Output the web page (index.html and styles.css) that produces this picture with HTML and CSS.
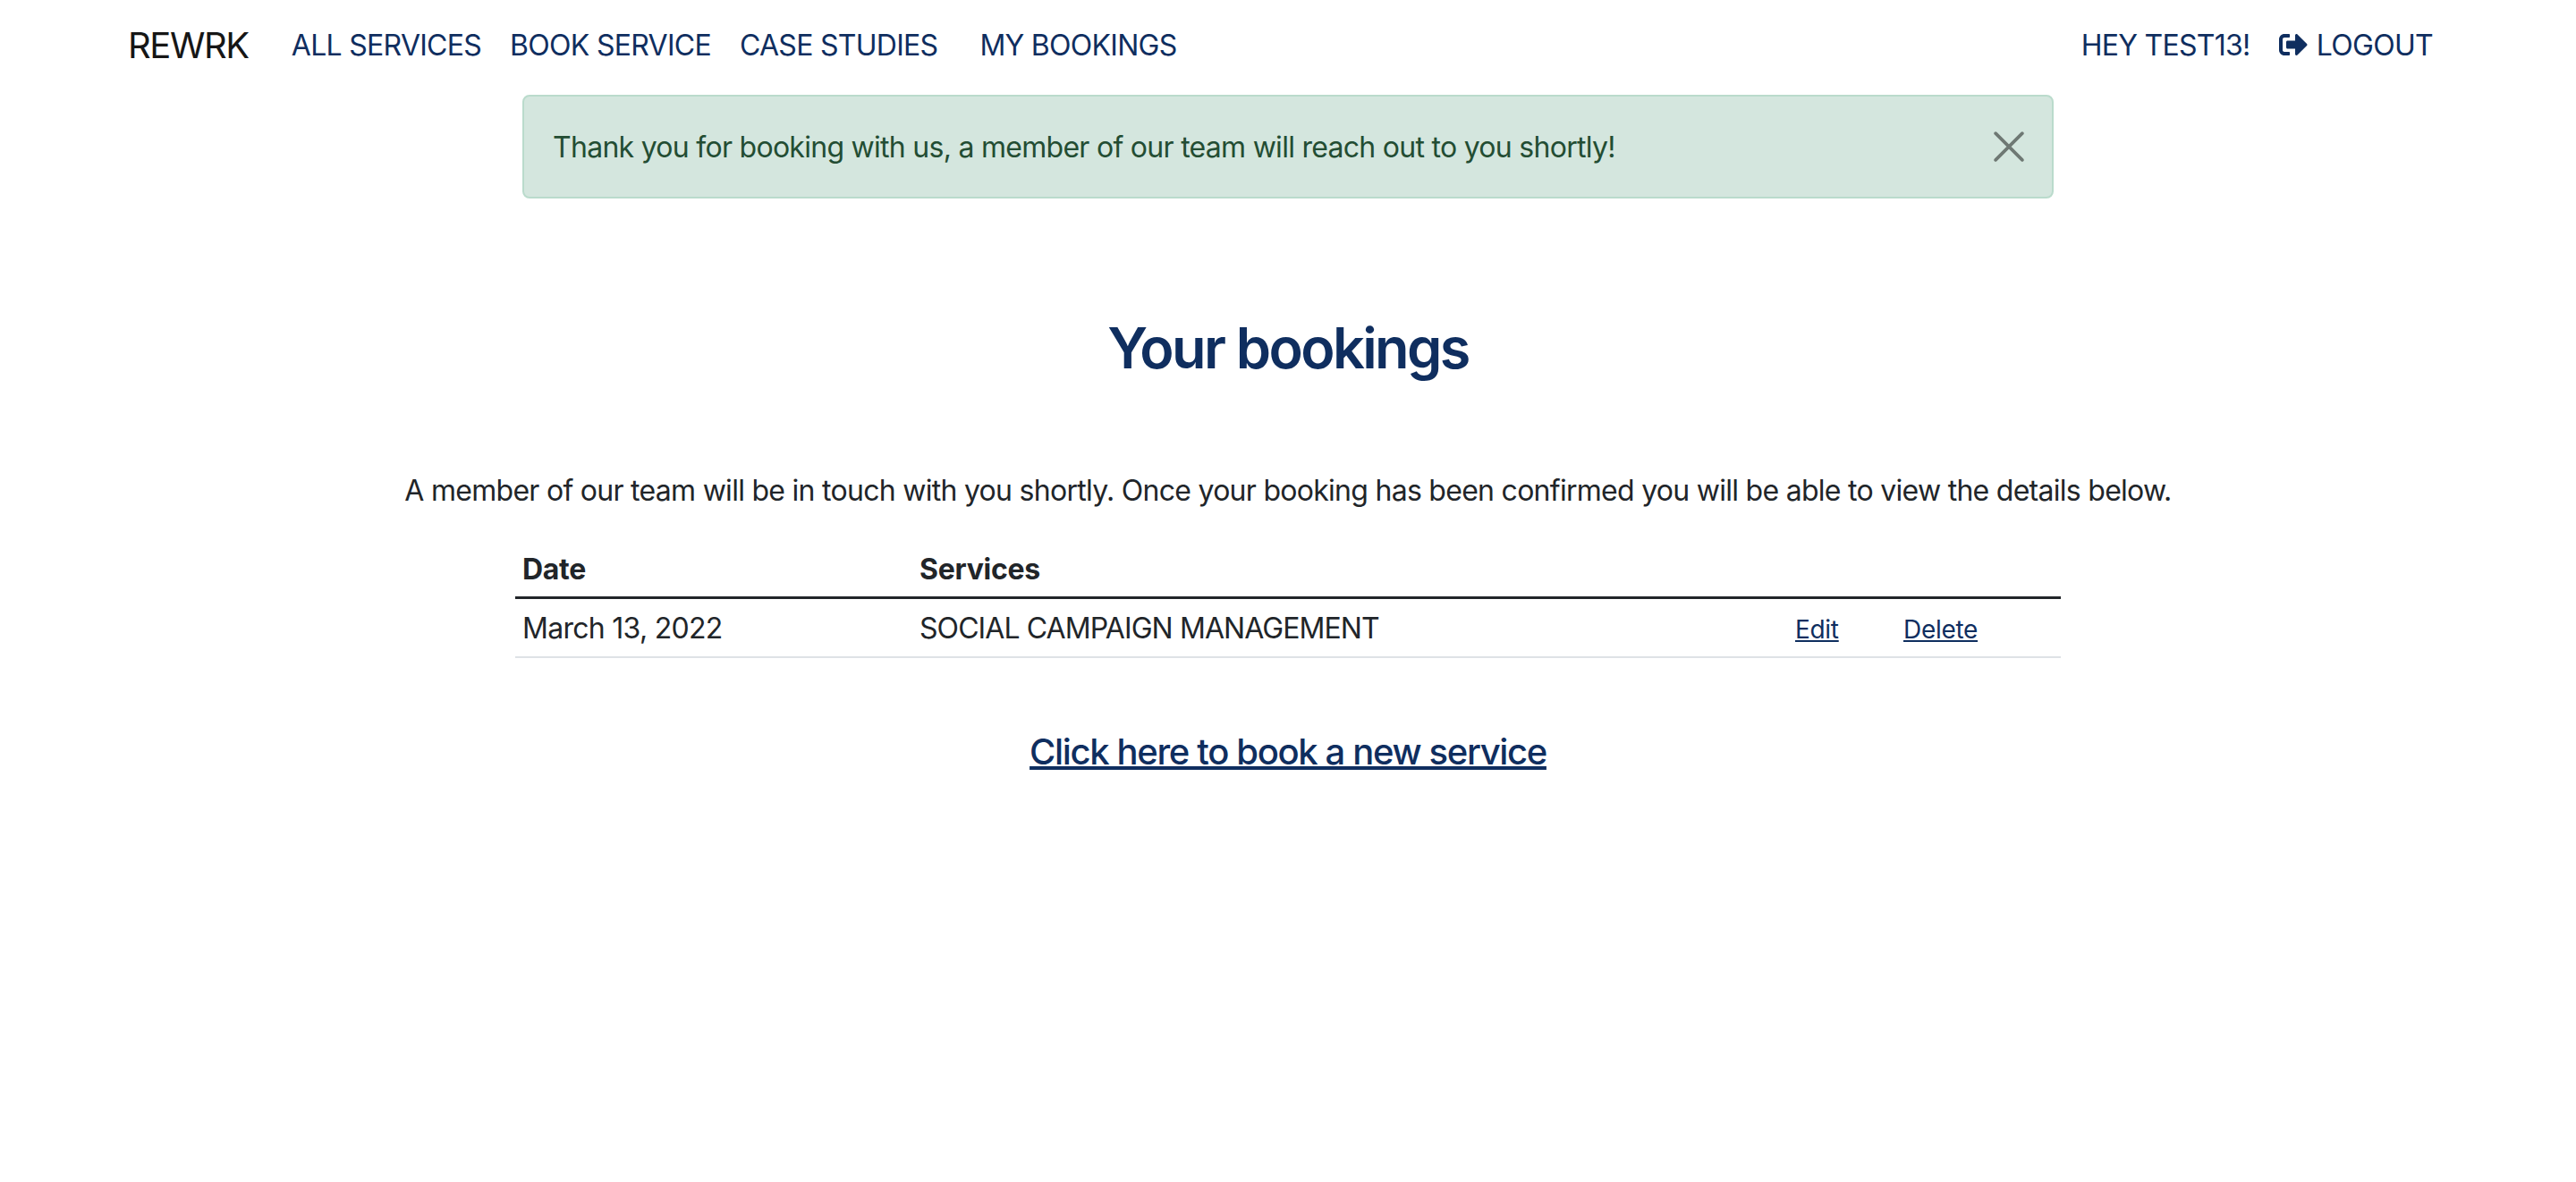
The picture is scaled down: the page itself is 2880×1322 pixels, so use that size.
FILE: index.html
```html
<!DOCTYPE html>
<html lang="en">
<head>
    <meta charset="UTF-8">
    <meta name="viewport" content="width=device-width, initial-scale=1.0">
    <title>Your bookings</title>
    <link rel="stylesheet" href="styles.css">
</head>
<body>
    <nav class="navbar">
        <a class="brand" href="#">REWRK</a>
        <div class="nav-links">
            <a href="#">ALL SERVICES</a>
            <a href="#">BOOK SERVICE</a>
            <a href="#">CASE STUDIES</a>
            <a class="nav-last" href="#">MY BOOKINGS</a>
        </div>
        <div class="nav-user">
            <a href="#">HEY TEST13!</a>
            <a class="logout" href="#">
                <svg class="logout-icon" viewBox="0 0 512 512" aria-hidden="true">
                    <path d="M497 273L329 441c-15 15-41 4.500-41-17v-96H152c-13.300 0-24-10.700-24-24v-96c0-13.300 10.700-24 24-24h136V88c0-21.400 25.900-32 41-17l168 168c9.300 9.400 9.300 24.600 0 34zM192 436v-40c0-6.600-5.400-12-12-12H96c-17.700 0-32-14.300-32-32V160c0-17.700 14.300-32 32-32h84c6.600 0 12-5.400 12-12V76c0-6.600-5.400-12-12-12H96c-53 0-96 43-96 96v192c0 53 43 96 96 96h84c6.600 0 12-5.400 12-12z"/>
                </svg>
                LOGOUT
            </a>
        </div>
    </nav>

    <div class="alert">
        <span class="alert-text">Thank you for booking with us, a member of our team will reach out to you shortly!</span>
        <button class="alert-close" type="button" aria-label="Close">
            <svg viewBox="0 0 16 16" aria-hidden="true">
                <path d="M1 1l14 14M15 1L1 15"/>
            </svg>
        </button>
    </div>

    <main class="content">
        <h1>Your bookings</h1>
        <p class="intro">A member of our team will be in touch with you shortly. Once your booking has been confirmed you will be able to view the details below.</p>

        <table class="bookings">
            <thead>
                <tr>
                    <th class="col-date">Date</th>
                    <th class="col-service">Services</th>
                    <th class="col-edit"></th>
                    <th class="col-delete"></th>
                </tr>
            </thead>
            <tbody>
                <tr>
                    <td>March 13, 2022</td>
                    <td class="service-name">SOCIAL CAMPAIGN MANAGEMENT</td>
                    <td><a class="small-link" href="#">Edit</a></td>
                    <td><a class="small-link" href="#">Delete</a></td>
                </tr>
            </tbody>
        </table>

        <a class="new-booking" href="#">Click here to book a new service</a>
    </main>
</body>
</html>
```
FILE: styles.css
```css
body {
    margin: 0;
    font-family: Inter, 'Liberation Sans', sans-serif;
    font-size: 32px;
    line-height: 1.5;
    letter-spacing: -0.72px;
    color: #212529;
    background-color: #fff;
}
a {
    color: #0f2e5f;
}
.navbar {
    display: flex;
    align-items: center;
    height: 102px;
    margin-bottom: 4px;
    padding: 0 160px 0 143px;
    box-sizing: border-box;
}
.navbar a {
    text-decoration: none;
}
.brand {
    font-size: 40px;
    letter-spacing: -1.4px;
    margin-right: 48px;
    color: #161616 !important;
}
.nav-links {
    display: flex;
    gap: 32px;
}
.nav-last {
    margin-left: 15px;
}
.nav-user {
    display: flex;
    gap: 32px;
    margin-left: auto;
}
.logout-icon {
    width: 32px;
    height: 32px;
    margin-right: 2px;
    fill: #0f2e5f;
    vertical-align: -4px;
}
.alert {
    display: flex;
    align-items: center;
    justify-content: space-between;
    width: 1712px;
    height: 116px;
    margin: 0 auto;
    padding: 0 32px;
    box-sizing: border-box;
    border: 2px solid #badbcc;
    border-radius: 8px;
    background-color: #d4e6de;
    color: #234d33;
}
.alert-text {
    padding-top: 2px;
}
.alert-close {
    width: 36px;
    height: 36px;
    margin-right: -2px;
    padding: 0;
    border: none;
    background: none;
}
.alert-close svg {
    display: block;
    width: 34px;
    height: 34px;
    margin: 1px;
    fill: none;
    stroke: #6e7873;
    stroke-width: 1.7;
    stroke-linecap: round;
}
.content {
    display: flex;
    flex-direction: column;
    align-items: center;
}
h1 {
    margin: 129px 0 0;
    font-size: 63px;
    font-weight: 600;
    line-height: 77px;
    letter-spacing: -2.6px;
    color: #0f2e5f;
}
.intro {
    margin: 97px 0 0;
}
.bookings {
    width: 1728px;
    margin-top: 32px;
    border-collapse: collapse;
    table-layout: fixed;
}
.bookings th, .bookings td {
    padding: 8px;
    text-align: left;
}
.bookings th {
    padding-bottom: 6px;
    font-weight: 700;
    letter-spacing: -0.3px;
    border-bottom: 3px solid #212529;
}
.bookings td {
    padding-top: 9px;
    padding-bottom: 7px;
    border-bottom: 2px solid #dee2e6;
}
.bookings .service-name {
    letter-spacing: -0.92px;
}
.col-date {
    width: 428px;
}
.col-service {
    width: 963px;
}
.col-edit {
    width: 105px;
}
.small-link {
    font-size: 28px;
    letter-spacing: -0.3px;
}
.new-booking {
    margin-top: 75px;
    font-size: 40px;
    font-weight: 500;
    letter-spacing: -1.35px;
}
```
